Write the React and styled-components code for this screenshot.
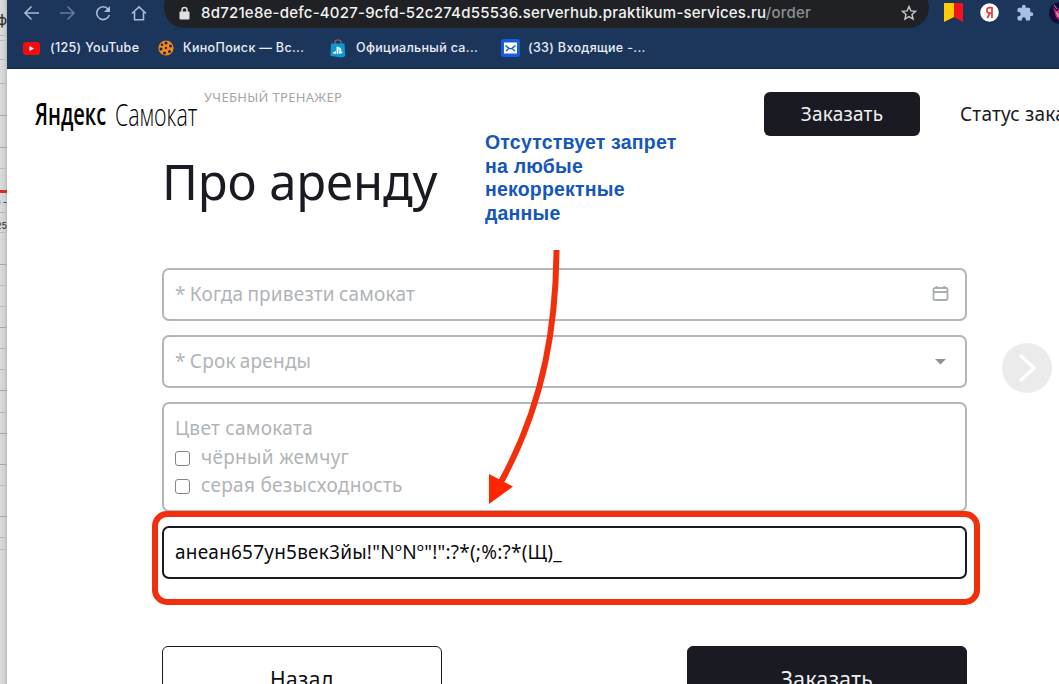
import React from "react";
import styled, { createGlobalStyle } from "styled-components";

const Global = createGlobalStyle`
  * { box-sizing: border-box; }
  html, body { margin: 0; padding: 0; overflow: hidden; background: #fff; }
  button, input { font: inherit; }
`;

const ui = `Inter, "Liberation Sans", sans-serif`;
const text = `"Noto Sans", "Open Sans", sans-serif`;

const Screen = styled.div`
  position: relative;
  display: flex;
  width: 1059px;
  height: 684px;
  overflow: hidden;
  background: #fff;
`;

const Sheet = styled.aside`
  flex: 0 0 7px;
  overflow: hidden;
  background: linear-gradient(90deg, #dcdcdc, #cfcfcf 70%, #b9b9b9);
`;
const SheetRow = styled.div`
  display: flex;
  justify-content: flex-end;
  align-items: center;
  height: ${(p) => p.$h}px;
  padding-top: ${(p) => p.$pt || 0}px;
  border-bottom: ${(p) => (p.$red ? 3 : 1)}px solid ${(p) => (p.$red ? "#cf2f2b" : p.$strong ? "#a6a6a6" : "#bcbcbc")};
  font: 500 ${(p) => p.$size || 9}px/1 ${ui};
  color: #333;
  white-space: nowrap;
`;

const Browser = styled.div`
  flex: 1;
  min-width: 0;
  display: flex;
  flex-direction: column;
`;
const Chrome = styled.header`
  height: 69px;
  background: #1b355b;
  border-bottom: 1px solid #14294a;
`;
const Toolbar = styled.div`
  display: flex;
  height: 28px;
`;
const NavIcons = styled.div`
  flex: 0 0 157px;
  display: flex;
  align-items: center;
  padding: 0 0 2px 16px;
  gap: 18.500px;
  svg { display: block; flex: none; }
`;
const Address = styled.div`
  flex: 0 0 765px;
  display: flex;
  align-items: center;
  height: 41px;
  margin-top: -13px;
  padding: 11px 12px 0 15px;
  border-radius: 21px;
  background: #202124;
  svg { display: block; flex: none; }
`;
const Url = styled.span`
  flex: 1;
  margin-left: 11px;
  font: 500 15px/20px ${ui};
  letter-spacing: 0.22px;
  color: #f1f3f4;
  white-space: nowrap;
`;
const UrlPath = styled.span`
  color: #8d9094;
`;
const Extensions = styled.div`
  display: flex;
  align-items: center;
  padding: 0 0 3px 15px;
  gap: 17px;
  svg { display: block; flex: none; }
`;
const Bookmarks = styled.nav`
  display: flex;
  height: 40px;
  align-items: center;
  padding-left: 16px;
`;
const Bookmark = styled.a`
  flex: 0 0 ${(p) => p.$w}px;
  display: flex;
  align-items: center;
  font: 500 12.5px/16px ${ui};
  letter-spacing: 0.33px;
  color: #e8edf5;
  white-space: nowrap;
  svg { display: block; flex: none; margin-right: ${(p) => p.$gap}px; }
`;

const Page = styled.main`
  flex: 1;
  font-family: ${text};
  color: #1a1b22;
`;
const Header = styled.div`
  display: flex;
  align-items: flex-start;
  height: 76px;
  padding: 23px 0 0 28px;
`;
const Logo = styled.a`
  flex: none;
  display: flex;
  width: 169px;
  height: 50px;
  color: #000;
`;
const LogoWord = styled.span`
  flex: none;
  width: ${(p) => p.$w}px;
  font: ${(p) => p.$weight} 31px/${(p) => p.$lh}px "Open Sans", sans-serif;
  transform: scaleX(${(p) => p.$scale});
  transform-origin: 0 0;
  white-space: nowrap;
`;
const Tagline = styled.span`
  flex: none;
  width: 560px;
  margin-top: -4px;
  font-size: 13px;
  line-height: 18px;
  letter-spacing: 0.32px;
  color: #a5a5a7;
`;
const OrderButton = styled.button`
  flex: 0 0 156px;
  height: 44px;
  border: 0;
  border-radius: 6px;
  background: #1a1b22;
  color: #f0f0f1;
  font-size: 19px;
  line-height: 44px;
  letter-spacing: 0.25px;
  padding: 0;
`;
const StatusLink = styled.a`
  flex: none;
  margin-left: 40px;
  font-size: 19px;
  line-height: 45px;
  letter-spacing: 0.2px;
  white-space: nowrap;
`;
const Form = styled.section`
  width: 805px;
  margin-left: 155px;
`;
const Title = styled.h1`
  margin: 0;
  height: 123px;
  font-size: 49px;
  font-weight: 400;
  line-height: 73px;
  letter-spacing: -0.1px;
`;
const Fields = styled.div`
  display: flex;
  flex-direction: column;
  gap: 14px;
`;
const Field = styled.div`
  display: flex;
  align-items: center;
  justify-content: space-between;
  height: 53px;
  padding: 0 16px 1px 11px;
  border: 2px solid ${(p) => (p.$filled ? "#1a1b22" : "#b2b7ba")};
  border-radius: 7px;
  font-size: 19px;
  letter-spacing: ${(p) => (p.$filled ? 0.22 : 0.2)}px;
  word-spacing: ${(p) => (p.$filled ? 0 : -1)}px;
  color: ${(p) => (p.$filled ? "#0c0c0e" : "#b0b4b7")};
  white-space: nowrap;
  svg { display: block; }
`;
const Colors = styled.div`
  height: 110px;
  padding: 10px 11px 0;
  border: 2px solid #b2b7ba;
  border-radius: 7px;
  font-size: 19px;
  line-height: 28.7px;
  letter-spacing: 0.3px;
  color: #b0b4b7;
`;
const Choice = styled.label`
  display: flex;
  align-items: center;
  gap: 11px;
`;
const Box = styled.span`
  width: 15px;
  height: 15px;
  margin-top: 2px;
  border: 1.3px solid #858585;
  border-radius: 3px;
  background: #fff;
`;
const Actions = styled.div`
  display: flex;
  justify-content: space-between;
  margin-top: 67px;
`;
const ActionButton = styled.button`
  width: 280px;
  height: 66px;
  padding: 0 0 1px;
  border: 1px solid #1a1b22;
  border-radius: 6px;
  background: ${(p) => (p.$dark ? "#1a1b22" : "#fff")};
  color: ${(p) => (p.$dark ? "#f0f0f1" : "#0c0c0e")};
  font-size: 21px;
  letter-spacing: 0.4px;
`;

const Note = styled.p`
  position: absolute;
  left: 485px;
  top: 131px;
  margin: 0;
  font: 700 19.5px/23.5px "Liberation Sans", sans-serif;
  letter-spacing: 0.2px;
  color: #1557b8;
  white-space: nowrap;
`;
const Highlight = styled.div`
  position: absolute;
  left: 152px;
  top: 511px;
  width: 828px;
  height: 94px;
  border: 6px solid #f22f0c;
  border-radius: 15px;
`;
const Arrow = styled.svg`
  position: absolute;
  left: 480px;
  top: 240px;
`;
const NextButton = styled.button`
  position: absolute;
  left: 1002px;
  top: 343px;
  width: 50px;
  height: 50px;
  padding: 0;
  border: 0;
  border-radius: 50%;
  background: #ebebeb;
  svg { display: block; }
`;
const Avatar = styled.svg`
  margin-left: -2px;
`;

const sheetRows = [
  { h: 36, t: "ф", size: 14, pt: 5 }, { h: 5 }, { h: 19 }, { h: 24 }, { h: 32, strong: 1 }, { h: 32, strong: 1 }, { h: 21 },
  { h: 24, red: 1 }, { h: 20, t: "0 -" }, { h: 20, t: "25", pt: 5 }, { h: 32, strong: 1 }, { h: 21 }, { h: 21 },
  { h: 21, strong: 1 }, { h: 21 }, { h: 21 }, { h: 21, strong: 1 }, { h: 22 }, { h: 21, strong: 1 },
  { h: 31, strong: 1 }, { h: 21 }, { h: 31, strong: 1 }, { h: 21 }, { h: 12 },
];

function NavigationIcons() {
  const line = { fill: "none", stroke: "#a9bbd6", strokeWidth: 1.6 };
  return (
    <NavIcons>
      <svg width="17" height="16" {...line}><path d="M16 8H2M8.500 1.500 2 8l6.500 6.500" /></svg>
      <svg width="17" height="16" {...line} stroke="#647a9d"><path d="M1 8h14M8.500 1.500 15 8l-6.500 6.500" /></svg>
      <svg width="18" height="16" {...line}><path d="M14.200 4.200A6.400 6.400 0 1 0 15.300 10" /><path d="M16 1v6h-6z" fill="#a9bbd6" stroke="none" /></svg>
      <svg width="17" height="16" {...line}><path d="M1 8.500 8 1.800l7 6.700M3.500 7v7.700h9V7" /></svg>
    </NavIcons>
  );
}

export default function App() {
  return (
    <>
      <Global />
      <Screen>
        <Sheet>
          {sheetRows.map((r, i) => (
            <SheetRow key={i} $h={r.h} $red={r.red} $strong={r.strong} $size={r.size} $pt={r.pt}>{r.t}</SheetRow>
          ))}
        </Sheet>
        <Browser>
          <Chrome>
            <Toolbar>
              <NavigationIcons />
              <Address>
                <svg width="11" height="14" viewBox="0 0 11 14">
                  <path d="M3 7V4a2.500 2.500 0 0 1 5 0v3" fill="none" stroke="#dfe1e4" strokeWidth="1.500" />
                  <rect x="0.500" y="5.500" width="10" height="8" rx="1" fill="#dfe1e4" />
                </svg>
                <Url>8d721e8e-defc-4027-9cfd-52c274d55536.serverhub.praktikum-services.ru<UrlPath>/order</UrlPath></Url>
                <svg width="16" height="16" viewBox="0 0 16 16" fill="none" stroke="#c6c8cb" strokeWidth="1.400">
                  <path d="M8 1.500 9.900 5.900 14.700 6.300 11 9.400 12.100 14.100 8 11.600 3.900 14.100 5 9.400 1.300 6.300 6.100 5.900z" />
                </svg>
              </Address>
              <Extensions>
                <svg width="19" height="19" viewBox="0 0 19 19"><path d="M0 0h10v14L0 19z" fill="#ffcc08" /><path d="M10 0h9v19l-9-5z" fill="#f4141c" /></svg>
                <svg width="19" height="19" viewBox="0 0 19 19">
                  <circle cx="9.500" cy="9.500" r="9.300" fill="#fff" />
                  <path d="M12 4v11M12 4.700H9.600a2.700 2.700 0 0 0 0 5.400H12M9.800 10 7.300 15" fill="none" stroke="#e9343a" strokeWidth="1.700" />
                </svg>
                <svg width="18" height="18" viewBox="0 0 24 24" fill="#a9c0e4">
                  <path d="M20.500 11H19V7c0-1.100-.9-2-2-2h-4V3.500a2.500 2.500 0 0 0-5 0V5H4a2 2 0 0 0-2 2v3.800h1.500a2.700 2.700 0 0 1 0 5.400H2V20c0 1.100.9 2 2 2h3.800v-1.500a2.700 2.700 0 0 1 5.400 0V22H17a2 2 0 0 0 2-2v-4h1.500a2.500 2.500 0 0 0 0-5z" />
                </svg>
                <Avatar width="22" height="22" viewBox="0 0 22 22">
                  <circle cx="11" cy="11" r="11" fill="#160d38" />
                  <path d="M4 5l4 4 3-5 5 3 3 8-7 5-5-5z" fill="#b52c78" /><path d="M7 10l3 2-1 3zM5 3l3 4" fill="#e87ba8" stroke="#e87ba8" />
                </Avatar>
              </Extensions>
            </Toolbar>
            <Bookmarks>
              <Bookmark $w={135} $gap={10}>
                <svg width="17" height="13"><rect width="17" height="13" rx="3" fill="#f40b0b" /><path d="M6.500 4v5l4.500-2.500z" fill="#fff" /></svg>
                (125) YouTube
              </Bookmark>
              <Bookmark $w={172} $gap={9}>
                <svg width="16" height="16" viewBox="0 0 16 16">
                  <circle cx="8" cy="8" r="7.600" fill="#ee8a20" />
                  <g fill="#2b2434"><circle cx="8" cy="3" r="1.500" /><circle cx="12.500" cy="6" r="1.500" /><circle cx="11.500" cy="11.500" r="1.500" /><circle cx="6.500" cy="13" r="1.500" /><circle cx="3" cy="9" r="1.500" /><circle cx="4" cy="4.800" r="1.300" /><circle cx="8" cy="8" r="1.200" /></g>
                </svg>
                КиноПоиск — Вс...
              </Bookmark>
              <Bookmark $w={171} $gap={10}>
                <svg width="16" height="19" viewBox="0 0 16 19">
                  <path d="M5 6V3q0-2 3-2t3 2v3" fill="none" stroke="#75605f" strokeWidth="1.500" />
                  <path d="M1 4.500h13.500l.8 12.500-3 1.500L.5 17z" fill="#0d96d4" />
                  <path d="M6.600 7.500 8.400 8v7l-1.800-.6z" fill="#fff" />
                  <path d="M8.200 8q3.600.6 3 3.800-.9.700-1.700 0 0-1.700-1.300-2zM6 12l-3 1.400q-.6 1.400 3 1.200zM9 12l3.600.8q.6 1.500-3.600 2z" fill="#fff" />
                </svg>
                Официальный са...
              </Bookmark>
              <Bookmark $w={160} $gap={8}>
                <svg width="19" height="18" viewBox="0 0 19 18"><rect width="19" height="18" rx="3" fill="#155dde" /><rect x="3" y="3.500" width="13" height="11" fill="#fff" /><path d="m4.500 6.500 3.500 2.800q1.500.8 3 0l3.500-2.800M5 12l2.500-2M14 12l-2.500-2" fill="none" stroke="#175bc9" strokeWidth="1.500" /></svg>
                (33) Входящие -...
              </Bookmark>
            </Bookmarks>
          </Chrome>
          <Page>
            <Header>
              <Logo>
                <LogoWord $w={80} $weight={600} $scale={0.645} $lh={42}>Яндекс</LogoWord>
                <LogoWord $w={82} $weight={300} $scale={0.69} $lh={45}>Самокат</LogoWord>
              </Logo>
              <Tagline>УЧЕБНЫЙ ТРЕНАЖЕР</Tagline>
              <OrderButton>Заказать</OrderButton>
              <StatusLink>Статус заказа</StatusLink>
            </Header>
            <Form>
              <Title>Про аренду</Title>
              <Fields>
                <Field>
                  * Когда привезти самокат
                  <svg width="17" height="19" viewBox="0 0 17 19" fill="none" stroke="#a9aeb1" strokeWidth="1.800">
                    <rect x="1.500" y="3" width="14" height="12" rx="1.500" /><path d="M1 7h15M4.700 1v2M12.300 1v2" />
                  </svg>
                </Field>
                <Field>
                  * Срок аренды
                  <svg width="17" height="7"><path d="M3 1h11L8.500 6.500z" fill="#8f9395" /></svg>
                </Field>
                <Colors>
                  <div>Цвет самоката</div>
                  <Choice><Box />чёрный жемчуг</Choice>
                  <Choice><Box />серая безысходность</Choice>
                </Colors>
                <Field $filled>анеан657ун5век3йы!"NºNº"!":?*(;%:?*(Щ)_</Field>
              </Fields>
              <Actions>
                <ActionButton>Назад</ActionButton>
                <ActionButton $dark>Заказать</ActionButton>
              </Actions>
            </Form>
          </Page>
        </Browser>
        <Note>Отсутствует запрет<br />на любые<br />некорректные<br />данные</Note>
        <NextButton aria-label="Вперёд">
          <svg width="50" height="50" fill="none" stroke="#fff" strokeWidth="3.500"><path d="M18 12 32 25 18 38" /></svg>
        </NextButton>
        <Highlight />
        <Arrow width="90" height="270" viewBox="480 240 90 270">
          <path d="M556.500 250C556 320 546 400 501 482" fill="none" stroke="#f22f0c" strokeWidth="6" />
          <path d="M489 474 513 486.500 489 504z" fill="#ff2600" />
        </Arrow>
      </Screen>
    </>
  );
}
